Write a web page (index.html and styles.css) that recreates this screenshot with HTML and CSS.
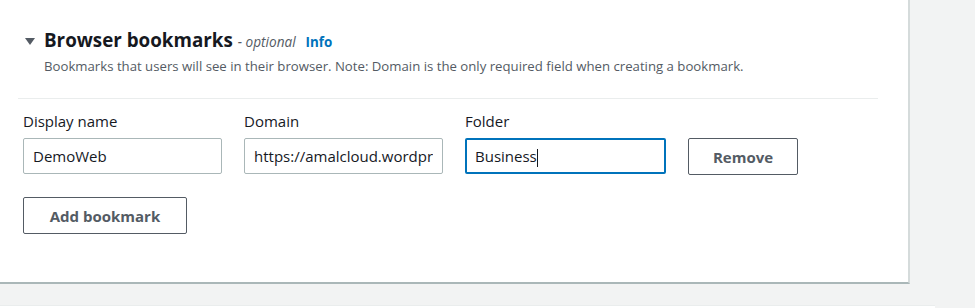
FILE: index.html
```html
<!DOCTYPE html>
<html>
<head>
<meta charset="utf-8">
<link rel="stylesheet" href="styles.css">
</head>
<body>
<div class="page">
  <section class="card">
    <div class="header">
      <svg class="caret" width="10" height="8" viewBox="0 0 10 8"><path d="M0 0 H10 L5 7 Z" fill="#545b64"/></svg>
      <div class="titles">
        <div class="title-row">
          <h2 class="title">Browser bookmarks</h2>
          <span class="optional">- optional</span>
          <a class="info">Info</a>
        </div>
        <p class="desc">Bookmarks that users will see in their browser. Note: Domain is the only required field when creating a bookmark.</p>
      </div>
    </div>
    <div class="divider"></div>
    <div class="body">
      <div class="row">
        <div class="field">
          <label class="label">Display name</label>
          <input class="input" type="text" value="DemoWeb" readonly>
        </div>
        <div class="field">
          <label class="label">Domain</label>
          <input class="input" type="text" value="https://amalcloud.wordpress.com" readonly>
        </div>
        <div class="field folder">
          <label class="label">Folder</label>
          <div class="input focus">Business<span class="cursor"></span></div>
        </div>
        <button class="btn remove">Remove</button>
      </div>
      <button class="btn add">Add bookmark</button>
    </div>
  </section>
  <div class="next-card"></div>
</div>
</body>
</html>
```
FILE: styles.css
```css
* { box-sizing: border-box; }
html, body { margin: 0; padding: 0; }
body {
  background: #f2f3f3;
  font-family: "Open Sans", "Noto Sans", sans-serif;
  color: #16191f;
  width: 975px;
  height: 308px;
  overflow: hidden;
}
.page { display: flex; flex-direction: column; }
.card {
  width: 910px;
  height: 284px;
  background: #fff;
  border-right: 2px solid #d5dbdb;
  border-bottom: 2px solid #aab7b8;
  padding-top: 29px;
}
.header { display: flex; align-items: flex-start; padding-left: 25px; }
.caret { margin-top: 9px; margin-right: 9px; flex: none; }
.title-row { display: flex; align-items: baseline; }
.title {
  margin: 0;
  font-size: 18.8px;
  font-weight: 700;
  color: #16191f;
  line-height: 22px;
}
.optional {
  font-size: 13.6px;
  font-style: italic;
  color: #545b64;
  margin-left: 5px;
}
.info {
  font-size: 13.4px;
  font-weight: 700;
  color: #0073bb;
  margin-left: 10px;
}
.desc {
  margin: 6px 0 0;
  font-size: 13.2px;
  line-height: 18px;
  color: #545b64;
}
.divider {
  margin: 23px 30px 0 18px;
  height: 1px;
  background: #eaeded;
}
.body { padding: 12px 0 0 23px; }
.row { display: flex; align-items: flex-end; gap: 22px; }
.field { display: flex; flex-direction: column; width: 199px; }
.folder { width: 201px; }
.label {
  font-size: 15px;
  line-height: 20px;
  color: #16191f;
  margin-bottom: 7px;
}
.input {
  display: block;
  width: 100%;
  height: 36px;
  border: 1px solid #aab7b8;
  border-radius: 2px;
  padding: 0 9px;
  font-family: inherit;
  font-size: 15px;
  line-height: 34px;
  color: #16191f;
  background: #fff;
  white-space: nowrap;
  overflow: hidden;
  outline: none;
}
.input.focus {
  border: 2px solid #0073bb;
  padding: 0 8px;
  line-height: 32px;
}
.cursor {
  display: inline-block;
  width: 1px;
  height: 18px;
  background: #16191f;
  vertical-align: middle;
}
.btn {
  font-family: inherit;
  height: 37px;
  background: #fff;
  border: 1px solid #545b64;
  border-radius: 2px;
  font-size: 15px;
  font-weight: 700;
  color: #545b64;
  padding: 0;
}
.remove { width: 110px; margin-bottom: -1px; }
.add { width: 164px; margin-top: 23px; }
.next-card {
  margin-top: 21px;
  width: 935px;
  height: 3px;
  background: #fff;
  border-top: 1px solid #eaeded;
}
```
